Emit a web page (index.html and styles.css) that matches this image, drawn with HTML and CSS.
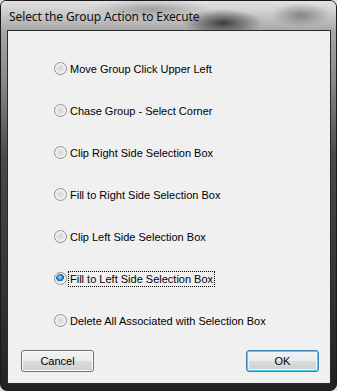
FILE: index.html
```html
<!DOCTYPE html>
<html lang="en">
<head>
    <meta charset="UTF-8">
    <title>Select the Group Action to Execute</title>
    <link rel="stylesheet" href="styles.css">
</head>
<body>
<div class="window">
    <!-- Glass title bar -->
    <div class="titlebar">
        <span class="title">Select the Group Action to Execute</span>
    </div>

    <!-- Client area with the choices -->
    <div class="client">
        <div class="choices">
            <label class="choice"><span class="radio"></span><span class="label">Move Group Click Upper Left</span></label>
            <label class="choice"><span class="radio"></span><span class="label">Chase Group - Select Corner</span></label>
            <label class="choice"><span class="radio"></span><span class="label">Clip Right Side Selection Box</span></label>
            <label class="choice"><span class="radio"></span><span class="label">Fill to Right Side Selection Box</span></label>
            <label class="choice"><span class="radio"></span><span class="label">Clip Left Side Selection Box</span></label>
            <label class="choice checked"><span class="radio"></span><span class="label focus">Fill to Left Side Selection Box</span></label>
            <label class="choice"><span class="radio"></span><span class="label">Delete All Associated with Selection Box</span></label>
        </div>

        <!-- Dialog buttons -->
        <div class="buttons">
            <button class="btn">Cancel</button>
            <button class="btn default">OK</button>
        </div>
    </div>
</div>
</body>
</html>
```

FILE: styles.css
```css
* {
    padding: 0;
    margin: 0;
    box-sizing: border-box;
}

html, body {
    width: 337px;
    height: 391px;
}

body {
    background: #dcdcdc;
    overflow: hidden;
}

.window {
    width: 337px;
    height: 391px;
    display: flex;
    flex-direction: column;
    border: 1px solid #1a1a1a;
    border-radius: 6px 7px 7px 7px;
    background: linear-gradient(
            to bottom,
            #b9b9b9 0%,
            #8a8a8a 20%,
            #4a4a4a 40%,
            #363636 70%,
            #222222 100%
    );
    overflow: hidden;
}

.titlebar {
    height: 29px;
    flex: none;
    padding: 6px 0 0 8px;
    background:
            radial-gradient(ellipse 40px 14px at 222px 22px, rgba(40, 40, 40, 0.85), rgba(40, 40, 40, 0) 100%),
            radial-gradient(ellipse 30px 12px at 300px 14px, rgba(90, 90, 90, 0.6), rgba(90, 90, 90, 0) 100%),
            radial-gradient(ellipse 60px 10px at 150px 8px, rgba(110, 110, 110, 0.5), rgba(110, 110, 110, 0) 100%),
            linear-gradient(to bottom, #e2e2e2 0%, #cdcdcd 40%, #a9a9a9 100%);
}

.title {
    font-family: "Noto Sans", sans-serif;
    font-size: 12px;
    color: #101010;
    letter-spacing: -0.1px;
}

.client {
    flex: 1;
    margin: 0 5px 6px 6px;
    background-color: #f0f0f0;
    border: 1px solid #2a2a2a;
    display: flex;
    flex-direction: column;
}

.choices {
    display: flex;
    flex-direction: column;
    gap: 25px;
    padding: 29px 0 0 46px;
}

.choice {
    display: flex;
    align-items: center;
    gap: 2px;
    height: 17px;
    font-family: "Liberation Sans", Arial, sans-serif;
    font-size: 11px;
    color: #000000;
}

.radio {
    width: 13px;
    height: 13px;
    flex: none;
    border-radius: 50%;
    border: 1px solid #8f9092;
    background: radial-gradient(circle at 50% 50%, #d4d4d4 0%, #e6e6e6 45%, #f7f7f7 80%);
    box-shadow: inset 0 0 0 1px #f4f4f4;
}

.checked .radio {
    background:
            radial-gradient(circle at 45% 40%, #b8e4ff 0%, #3e9ee0 22%, #145a9c 42%, rgba(20, 90, 156, 0) 46%),
            radial-gradient(circle at 50% 50%, #d4d4d4 0%, #e6e6e6 45%, #f7f7f7 80%);
}

.label {
    padding: 1px 1px;
}

.focus {
    outline: 1px dotted #000000;
    outline-offset: 0;
}

.buttons {
    margin-top: auto;
    display: flex;
    justify-content: space-between;
    padding: 0 11px 11px 13px;
}

.btn {
    width: 73px;
    height: 22px;
    font-family: "Liberation Sans", Arial, sans-serif;
    font-size: 11px;
    color: #000000;
    border: 1px solid #707070;
    border-radius: 3px;
    background: linear-gradient(
            to bottom,
            #f2f2f2 0%,
            #ebebeb 48%,
            #dddddd 50%,
            #cfcfcf 100%
    );
    box-shadow: inset 0 0 0 1px #fcfcfc;
}

.btn.default {
    border-color: #3c7fb1;
    box-shadow: inset 0 0 0 1px #48d2f8, inset 0 0 0 2px #eaf6fd;
}
```
